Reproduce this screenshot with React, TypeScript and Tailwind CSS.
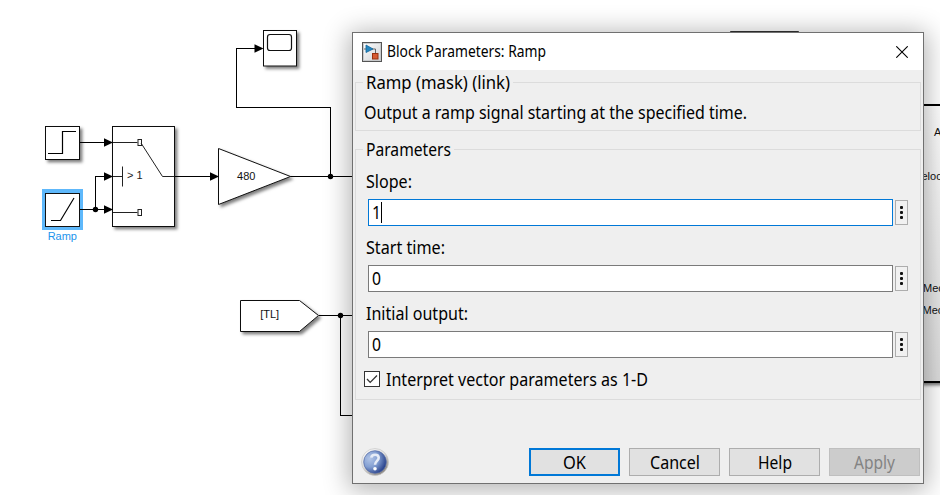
import React from "react";

const uiFont = "font-['Noto_Sans','Open_Sans',sans-serif]";

function Line({ points }: { points: string }) {
  return <polyline points={points} fill="none" stroke="#000" strokeWidth="1" shapeRendering="crispEdges" />;
}

function Arrow({ x, y }: { x: number; y: number }) {
  return <path d={`M${x} ${y} l-9 -4.3 v8.6 z`} fill="#000" />;
}

function Diagram() {
  return (
    <svg width="940" height="495" viewBox="0 0 940 495" className="block" fontFamily="'Liberation Sans', Arial, sans-serif">
      <defs>
        <filter id="blockShadow" x="-20%" y="-20%" width="150%" height="150%">
          <feDropShadow dx="2.4" dy="2.4" stdDeviation="1.5" floodColor="#000" floodOpacity="0.5" />
        </filter>
        <linearGradient id="plant" x1="0" y1="0" x2="0" y2="1">
          <stop offset="0" stopColor="#fff" />
          <stop offset="1" stopColor="#dcdcdc" />
        </linearGradient>
      </defs>

      <Line points="174,176.5 212,176.5" />
      <Line points="290,176.5 353,176.5" />
      <Line points="330.5,176.5 330.5,107.5 236.5,107.5 236.5,48.5 256,48.5" />
      <Line points="319,315.5 353,315.5" />
      <Line points="340.5,315.5 340.5,415.5 353,415.5" />

      <rect x="45.5" y="126.5" width="34" height="33" fill="#fff" stroke="#111" filter="url(#blockShadow)" />
      <path d="M48 153.5 h14.5 v-22 h13.5" fill="none" stroke="#000" strokeWidth="1.2" />

      <rect x="42" y="189" width="41" height="41" fill="#5eb8fb" />
      <rect x="45.5" y="193.5" width="34" height="33" fill="#fff" stroke="#111" />
      <path d="M51 220.5 h9.5 l13.5 -22.5" fill="none" stroke="#000" strokeWidth="1.2" />
      <text x="62.3" y="240" textAnchor="middle" fontSize="11" fill="#1c94ec">Ramp</text>

      <Line points="80,142.5 105,142.5" />
      <Line points="80,209.5 105,209.5" />
      <Line points="95.5,209.5 95.5,176.5 105,176.5" />

      <rect x="112.5" y="126.5" width="62" height="100" fill="#fff" stroke="#111" filter="url(#blockShadow)" />
      <g fill="none" stroke="#222">
        <path d="M113 142.5 h24.5 M113 212.5 h24.5 M113 176.5 h9.5 M122.5 166.5 v20" />
        <rect x="138" y="139.5" width="3.5" height="6" />
        <rect x="138" y="209.5" width="3.5" height="6" />
        <path d="M141 143 L162.5 176.5 H174" />
      </g>
      <text x="127" y="179.3" fontSize="11" fill="#222">&gt; 1</text>

      <path d="M218.5 148.5 V204.5 L290.5 176.5 Z" fill="#fff" stroke="#111" filter="url(#blockShadow)" />
      <text x="246.3" y="180.3" textAnchor="middle" fontSize="11" fill="#111">480</text>

      <rect x="263.5" y="30.5" width="33" height="35.5" fill="#fff" stroke="#111" filter="url(#blockShadow)" />
      <rect x="267.5" y="34.5" width="24" height="16" rx="2.5" fill="#fff" stroke="#111" strokeWidth="1.2" />

      <path d="M240.5 300.5 H299.5 L318.5 315.5 L299.5 331.5 H240.5 Z" fill="#fff" stroke="#111" filter="url(#blockShadow)" />
      <text x="269.7" y="318.3" textAnchor="middle" fontSize="11" fill="#111">[TL]</text>

      <Arrow x={113} y={142.5} />
      <Arrow x={113} y={176.5} />
      <Arrow x={113} y={209.5} />
      <Arrow x={219} y={176.5} />
      <Arrow x={263.5} y={48.5} />
      <circle cx="95.5" cy="209.5" r="2.7" />
      <circle cx="330.5" cy="176.5" r="2.7" />
      <circle cx="340.5" cy="315.5" r="2.7" />

      <rect x="731" y="32" width="67" height="20" fill="#fff" stroke="#000" strokeWidth="1.6" />
      <rect x="800" y="105" width="160" height="277" fill="url(#plant)" stroke="#000" strokeWidth="2" filter="url(#blockShadow)" />
      <g fontSize="11" fill="#111">
        <text x="934" y="136">A</text>
        <text x="921.5" y="180">eloc</text>
        <text x="923" y="292">Mec</text>
        <text x="922.5" y="314">Mec</text>
      </g>
    </svg>
  );
}

function RampIcon() {
  return (
    <svg width="20" height="20" viewBox="0 0 20 20" className="shrink-0">
      <defs>
        <linearGradient id="tile" x1="0" y1="0" x2="1" y2="1">
          <stop offset="0" stopColor="#fff" />
          <stop offset="1" stopColor="#cfd1d4" />
        </linearGradient>
      </defs>
      <rect x="0.5" y="0.5" width="19" height="19" fill="url(#tile)" stroke="#555" />
      <rect x="1.5" y="1.5" width="17" height="17" fill="none" stroke="#c8cacc" />
      <path d="M2 7 H13.5 V12" fill="none" stroke="#666" />
      <path d="M4 3 L11 7 L4 10.5 Z" fill="#2687c0" stroke="#11649a" strokeWidth="0.8" />
      <rect x="10.5" y="11.5" width="5.5" height="5.5" fill="#d65a32" stroke="#98310f" />
    </svg>
  );
}

function HelpIcon() {
  return (
    <svg width="28" height="28" viewBox="0 0 28 28" className="shrink-0">
      <defs>
        <radialGradient id="ball" cx="0.28" cy="0.35" r="0.75">
          <stop offset="0" stopColor="#b2c5e7" />
          <stop offset="0.5" stopColor="#839fd2" />
          <stop offset="1" stopColor="#263f89" />
        </radialGradient>
        <linearGradient id="rim" x1="0" y1="0" x2="0.7" y2="1">
          <stop offset="0" stopColor="#fff" />
          <stop offset="0.5" stopColor="#dedede" />
          <stop offset="1" stopColor="#85817d" />
        </linearGradient>
      </defs>
      <circle cx="14" cy="14" r="13.5" fill="url(#rim)" stroke="#c9c9c9" strokeWidth="0.7" />
      <circle cx="14" cy="14" r="11.3" fill="url(#ball)" stroke="#5269a5" strokeWidth="0.7" />
      <path d="M10.3 9.6 C10.8 5.8 17.6 5.8 17.7 9.8 C17.7 12.6 14 13.2 14 16.8" fill="none" stroke="#e6ecf7" strokeWidth="2.6" />
      <circle cx="14" cy="20.8" r="1.8" fill="#fff" />
    </svg>
  );
}

/* A line of dialog text fitted to a fixed advance width. */
function Fit({ text, width, size = 18, className = "" }: { text: string; width: number; size?: number; className?: string }) {
  return (
    <svg width={width} height="24" className={`block shrink-0 overflow-visible ${uiFont} ${className}`}>
      <text x="0" y="18" fontSize={size} textLength={width} lengthAdjust="spacingAndGlyphs" fill="currentColor">
        {text}
      </text>
    </svg>
  );
}

function Field({ label, labelWidth, value, focused = false }: { label: string; labelWidth: number; value: string; focused?: boolean }) {
  return (
    <div className="flex h-[66px] flex-col">
      <div className="h-[29px] pl-[10px]">
        <Fit text={label} width={labelWidth} />
      </div>
      <div className="flex items-center gap-[2px] pl-[12px]">
        <div className={`flex h-[27px] w-[525px] items-center border bg-white pl-[3px] ${focused ? "border-[#0078d7]" : "border-[#7a7a7a]"}`}>
          <Fit text={value} width={9} />
          {focused && <div className="h-[21px] w-px bg-black" />}
        </div>
        <div className="flex h-[25px] w-[13px] flex-col items-center justify-center gap-[2px] border border-[#adadad] bg-[#f1f1f1]">
          <i className="size-[3px] rounded-[1px] bg-[#111]" />
          <i className="size-[3px] rounded-[1px] bg-[#111]" />
          <i className="size-[3px] rounded-[1px] bg-[#111]" />
        </div>
      </div>
    </div>
  );
}

function DialogButton({ text, width, tone }: { text: string; width: number; tone: string }) {
  return (
    <div className={`flex h-[28px] w-[91px] items-center justify-center ${tone}`}>
      <Fit text={text} width={width} className="mt-[2px]" />
    </div>
  );
}

function Dialog() {
  return (
    <div className="absolute left-[352px] top-[32px] flex h-[452px] w-[572px] flex-col border border-[#707070] bg-[#efefef] text-black shadow-[0_3px_24px_3px_rgba(0,0,0,0.3)]">
      <div className="flex h-[37px] shrink-0 items-center bg-white pl-[9px] pr-[15px]">
        <RampIcon />
        <Fit text="Block Parameters: Ramp" width={159} size={16} className="ml-[5px] -mt-[2px]" />
        <svg width="12" height="12" viewBox="0 0 12 12" className="ml-auto">
          <path d="M0.3 0.3 L11.7 11.7 M11.7 0.3 L0.3 11.7" stroke="#000" strokeWidth="1.1" />
        </svg>
      </div>

      <div className="ml-[2px] mt-[12px] h-[49px] w-[566px] shrink-0 border border-[#dcdcdc]">
        <div className="-mt-[12px] ml-[7px] w-fit bg-[#efefef] pl-[3px] pr-[3px]">
          <Fit text="Ramp (mask) (link)" width={144} />
        </div>
        <div className="mt-[6px] pl-[8px]">
          <Fit text="Output a ramp signal starting at the specified time." width={383} />
        </div>
      </div>

      <div className="ml-[2px] mt-[18px] h-[251px] w-[566px] shrink-0 border border-[#dcdcdc]">
        <div className="-mt-[12px] ml-[7px] w-fit bg-[#efefef] pl-[3px] pr-[3px]">
          <Fit text="Parameters" width={85} />
        </div>
        <div className="mt-[8px]">
          <Field label="Slope:" labelWidth={46} value="1" focused />
          <Field label="Start time:" labelWidth={79} value="0" />
          <Field label="Initial output:" labelWidth={102} value="0" />
        </div>
        <div className="mt-[2px] flex h-[18px] items-center pl-[8px]">
          <div className="flex size-[16px] items-center justify-center border border-[#333] bg-white">
            <svg width="14" height="14" viewBox="0 0 14 14">
              <path d="M2 7 L5.2 10.4 L12 3.5" fill="none" stroke="#333" strokeWidth="1.3" />
            </svg>
          </div>
          <Fit text="Interpret vector parameters as 1-D" width={262} className="ml-[6px] mt-[2px]" />
        </div>
      </div>

      <div className="mt-auto mb-[7px] flex h-[28px] shrink-0 items-center pl-[8px] pr-[3px]">
        <HelpIcon />
        <div className="ml-auto flex gap-[9px]">
          <DialogButton text="OK" width={23} tone="border-2 border-[#0078d7] bg-[#e1e1e1]" />
          <DialogButton text="Cancel" width={50} tone="border border-[#adadad] bg-[#e1e1e1]" />
          <DialogButton text="Help" width={34} tone="border border-[#adadad] bg-[#e1e1e1]" />
          <DialogButton text="Apply" width={41} tone="border border-[#bfbfbf] bg-[#cccccc] text-[#838383]" />
        </div>
      </div>
    </div>
  );
}

export default function App() {
  return (
    <div className="relative h-[495px] w-[940px] overflow-hidden bg-white">
      <Diagram />
      <Dialog />
    </div>
  );
}
